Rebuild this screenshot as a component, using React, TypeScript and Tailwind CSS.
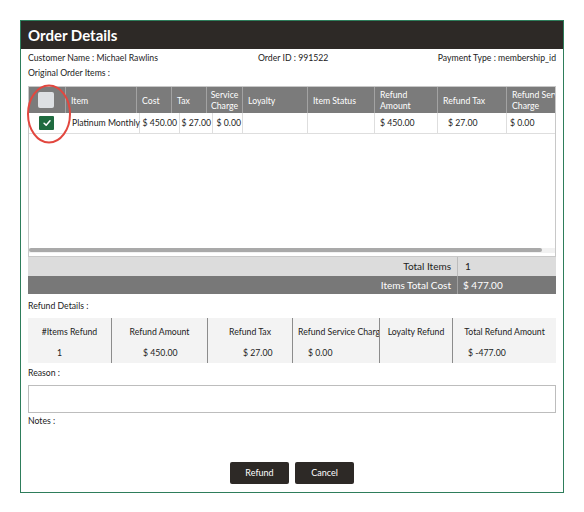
const headCols = [
  { lines: [""], w: "w-[37px]" },
  { lines: ["Item"], w: "w-[71px]" },
  { lines: ["Cost"], w: "w-[35px]" },
  { lines: ["Tax"], w: "w-[35px]" },
  { lines: ["Service", "Charge"], w: "w-[36px]", center: true },
  { lines: ["Loyalty"], w: "w-[65px]" },
  { lines: ["Item Status"], w: "w-[67px]" },
  { lines: ["Refund", "Amount"], w: "w-[63px]" },
  { lines: ["Refund Tax"], w: "w-[69px]" },
  { lines: ["Refund Service", "Charge"], w: "w-[80px]" },
];

const rowCells = [
  { value: "Platinum Monthly", w: "w-[70px]", cls: "pl-[2px]" },
  { value: "$ 450.00", w: "w-[40px]", cls: "justify-end pr-[2px]" },
  { value: "$ 27.00", w: "w-[33px]", cls: "justify-end pr-[1px]" },
  { value: "$ 0.00", w: "w-[30px]", cls: "justify-end pr-[1px]" },
  { value: "", w: "w-[65px]", cls: "" },
  { value: "", w: "w-[67px]", cls: "" },
  { value: "$ 450.00", w: "w-[63px]", cls: "pl-[5px]" },
  { value: "$ 27.00", w: "w-[69px]", cls: "pl-[10px]" },
  { value: "$ 0.00", w: "w-[80px]", cls: "pl-[3px]" },
];

const refundCols = [
  { label: "#Items Refund", value: "1", w: "w-[84px]", pad: "pl-[29px]" },
  { label: "Refund Amount", value: "$ 450.00", w: "w-[96px]", pad: "pl-[31px]" },
  { label: "Refund Tax", value: "$ 27.00", w: "w-[85px]", pad: "pl-[35px]" },
  { label: "Refund Service Charge", value: "$ 0.00", w: "w-[87px]", pad: "pl-[15px]", left: true },
  { label: "Loyalty Refund", value: "", w: "w-[73px]", pad: "" },
  { label: "Total Refund Amount", value: "$ -477.00", w: "flex-1", pad: "pl-[15px]" },
];

export default function App() {
  return (
    <main className="min-h-[512px] bg-white font-['Lato','Liberation_Sans',sans-serif] text-[8.7px] text-[#222]">
      <div className="relative ml-[20px] mt-[20px] flex h-[473px] w-[544px] flex-col border border-[#2e7d5b]">
        <header className="flex h-[28px] items-center bg-[#2d2926] px-[7px] text-[15px] font-bold text-white">
          Order Details
        </header>

        <div className="flex flex-1 flex-col px-[7px]">
          <div className="flex h-[18px] items-center">
            <span className="w-[230px]">Customer Name : Michael Rawlins</span>
            <span>Order ID : 991522</span>
            <span className="ml-auto">Payment Type : membership_id</span>
          </div>
          <div className="flex h-[12px] items-center">Original Order Items :</div>

          <div className="mt-[7px] flex h-[171px] flex-col overflow-hidden border border-[#c8c8c8]">
            <div className="flex h-[26px] shrink-0 bg-[#7b7b7b] text-white">
              {headCols.map((col, i) => (
                <div
                  key={i}
                  className={`${col.w} flex shrink-0 flex-col justify-center overflow-hidden whitespace-nowrap border-r border-[#a3a3a3] leading-[11px] ${
                    col.center ? "items-center" : "pl-[5px]"
                  }`}
                >
                  {i === 0 ? (
                    <span className="ml-[4px] block h-[16px] w-[16px] rounded-[2px] bg-[#dde0e3]" />
                  ) : (
                    col.lines.map((line) => <span key={line}>{line}</span>)
                  )}
                </div>
              ))}
            </div>

            <div className="flex h-[21px] shrink-0 border-b border-[#dedede]">
              <div className="flex w-[41px] shrink-0 items-center">
                <span className="ml-[10px] grid h-[14px] w-[15px] place-items-center rounded-[1px] bg-[#1f6b3f]">
                  <svg viewBox="0 0 12 12" className="h-[10px] w-[10px]">
                    <path d="M2.5 6.3 L5 8.6 L9.6 3.4" fill="none" stroke="white" strokeWidth="1.8" strokeLinecap="round" strokeLinejoin="round" />
                  </svg>
                </span>
              </div>
              {rowCells.map((cell, i) => (
                <div
                  key={i}
                  className={`${cell.w} flex shrink-0 items-center whitespace-nowrap ${i < 8 ? "border-r border-[#dedede]" : ""} ${cell.cls}`}
                >
                  {cell.value}
                </div>
              ))}
            </div>

            <div className="mt-auto mb-[3px] h-[5px] bg-[#f1f1f1]">
              <div className="h-[4px] w-[513px] rounded-full bg-[#a9a9a9]" />
            </div>
          </div>

          <div className="flex h-[19px] bg-[#dcdcdc]">
            <div className="flex flex-1 items-center justify-end border-r border-[#bcbcbc] pr-[6px] text-[10px]">
              Total Items
            </div>
            <div className="flex w-[98px] items-center pl-[7px] text-[10px]">1</div>
          </div>
          <div className="flex h-[18px] bg-[#787878] text-white">
            <div className="flex flex-1 items-center justify-end border-r border-[#a0a0a0] pr-[6px] text-[10px]">
              Items Total Cost
            </div>
            <div className="flex w-[98px] items-center pl-[5px] text-[10px]">$ 477.00</div>
          </div>

          <div className="flex h-[24px] items-center">Refund Details :</div>

          <div className="flex h-[45px] bg-[#f3f3f3]">
            {refundCols.map((col, i) => (
              <div
                key={i}
                className={`${col.w} flex shrink-0 flex-col overflow-hidden ${i < 5 ? "border-r border-[#8c8c8c]" : ""}`}
              >
                <div
                  className={`flex h-[28px] items-center whitespace-nowrap ${
                    col.left ? "pl-[5px]" : "justify-center"
                  }`}
                >
                  {col.label}
                </div>
                <div className={`flex h-[17px] items-start ${col.pad}`}>{col.value}</div>
              </div>
            ))}
          </div>

          <div className="flex h-[20px] items-center">Reason :</div>
          <div className="mt-[2px] h-[28px] border border-[#bdbdbd] bg-white" />
          <div className="flex h-[16px] items-center">Notes :</div>

          <div className="mt-[33px] flex justify-center gap-[6px]">
            <button
              type="button"
              className="h-[22px] w-[59px] rounded-[2px] bg-[#2d2926] text-[9px] text-white"
            >
              Refund
            </button>
            <button
              type="button"
              className="h-[22px] w-[59px] rounded-[2px] bg-[#2d2926] text-[9px] text-white"
            >
              Cancel
            </button>
          </div>
        </div>

        <svg
          className="pointer-events-none absolute left-[4px] top-[62px]"
          width="48"
          height="62"
          viewBox="0 0 48 62"
        >
          <ellipse cx="24" cy="31" rx="21" ry="28.5" fill="none" stroke="#e2473f" strokeWidth="2" />
        </svg>
      </div>
    </main>
  );
}
